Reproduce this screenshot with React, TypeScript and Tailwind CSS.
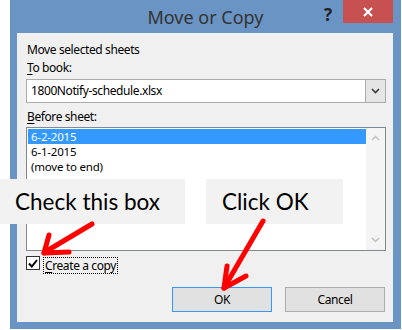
export default function App() {
  const ui = "font-['Noto_Sans',sans-serif]";
  const callout = "font-['Lato',sans-serif]";

  return (
    <div className="relative h-[330px] w-[402px] overflow-hidden bg-white">
      {/* dialog window */}
      <div className={`ml-[10px] flex h-[329px] w-[391px] flex-col bg-[#6a94c3] ${ui}`}>
        {/* title bar */}
        <div className="flex h-[33px] items-start">
          <div className="w-[83px]" />
          <div className="flex-1 pt-[5px] text-center text-[18px] leading-[24px] text-[#333333]">Move or Copy</div>
          <div className="flex w-[83px] items-start">
            <span className="ml-[6px] mt-[5px] w-[10px] text-[17px] font-bold leading-[20px] text-[#222]">?</span>
            <div className="ml-[9px] flex h-[23px] w-[50px] items-center justify-center bg-[#c75050]">
              <svg width="10" height="10" viewBox="0 0 10 10">
                <path d="M1 1 L9 9 M9 1 L1 9" stroke="#fff" strokeWidth="2.2" />
              </svg>
            </div>
          </div>
        </div>

        {/* client area */}
        <div className="ml-[7px] mr-[8px] h-[289px] bg-[#f0f0f0] pl-[9px] pr-[7px] pt-[9px] text-[12px] leading-[16px] tracking-[-0.4px] text-black">
          <div className="pl-[1px]">Move selected sheets</div>
          <div className="mt-[2px] pl-[1px]">
            <span className="underline underline-offset-2">T</span>o book:
          </div>

          <div className="mt-[3px] flex h-[24px] border border-[#acacac] bg-white">
            <div className="flex-1 pl-[4px] leading-[22px]">1800Notify-schedule.xlsx</div>
            <div className="flex w-[20px] items-center justify-center border-l border-[#acacac] bg-[#e5e5e5]">
              <svg width="9" height="6" viewBox="0 0 9 6">
                <path d="M1 1 L4.5 4.5 L8 1" fill="none" stroke="#3a3a3a" strokeWidth="1.6" />
              </svg>
            </div>
          </div>

          <div className="mt-[6px] pl-[1px]">
            <span className="underline underline-offset-2">B</span>efore sheet:
          </div>

          <div className="mt-[2px] flex h-[124px] border border-[#828790] bg-white">
            <div className="flex-1 pl-[1px] pt-[1px] text-[11.5px] tracking-[-0.2px]">
              <div className="h-[15px] bg-[#3399ff] pl-[3px] leading-[15px] text-white">6-2-2015</div>
              <div className="h-[15px] pl-[3px] leading-[15px]">6-1-2015</div>
              <div className="h-[15px] pl-[3px] leading-[15px]">(move to end)</div>
            </div>
            <div className="flex w-[19px] flex-col items-center justify-between bg-[#f4f4f4] py-[7px]">
              <svg width="9" height="6" viewBox="0 0 9 6">
                <path d="M1 5 L4.5 1.5 L8 5" fill="none" stroke="#c2c2c2" strokeWidth="1.5" />
              </svg>
              <svg width="9" height="6" viewBox="0 0 9 6">
                <path d="M1 1 L4.5 4.5 L8 1" fill="none" stroke="#c2c2c2" strokeWidth="1.5" />
              </svg>
            </div>
          </div>

          <div className="mt-[5px] flex h-[18px] items-start">
            <div className="flex h-[14px] w-[14px] items-center justify-center border border-[#333] bg-white">
              <svg width="10" height="9" viewBox="0 0 10 9">
                <path d="M1 4.5 L3.8 7.5 L9 1" fill="none" stroke="#000" strokeWidth="2" />
              </svg>
            </div>
            <div className="ml-[3px] mt-[1px] h-[17px] border border-dotted border-black px-[1px] leading-[15px]">
              <span className="underline underline-offset-2">C</span>reate a copy
            </div>
          </div>

          <div className="mt-[13px] flex justify-end gap-[13px] pr-[1px]">
            <div className="flex h-[25px] w-[100px] items-center justify-center border border-[#3399ff] bg-[#e1e1e1]">OK</div>
            <div className="flex h-[25px] w-[100px] items-center justify-center border border-[#adadad] bg-[#e1e1e1]">Cancel</div>
          </div>
        </div>
      </div>

      {/* callouts */}
      <div className={`absolute left-0 top-[179px] flex h-[45px] w-[185px] items-center bg-[#f2f2f2] pl-[15px] text-[22.5px] text-black ${callout}`}>
        Check this box
      </div>
      <div className={`absolute left-[206px] top-[179px] flex h-[45px] w-[137px] items-center bg-[#f2f2f2] pl-[16px] text-[22.5px] text-black ${callout}`}>
        Click OK
      </div>

      {/* arrows */}
      <svg className="pointer-events-none absolute left-0 top-0" width="402" height="330" viewBox="0 0 402 330">
        <g stroke="#ff0000" strokeWidth="5" strokeLinecap="round" fill="none">
          <path d="M92 224 L45 252" />
          <path d="M44 253 L69 252" />
          <path d="M44 253 L49 235" />
          <path d="M263 221 L224 288" />
          <path d="M224 288 L227 266" />
          <path d="M224 288 L246 276" />
        </g>
      </svg>
    </div>
  );
}
